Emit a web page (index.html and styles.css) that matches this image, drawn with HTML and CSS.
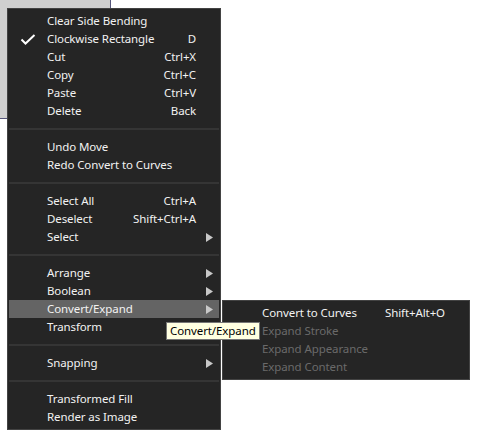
FILE: index.html
```html
<!DOCTYPE html>
<html>
<head>
<meta charset="utf-8">
<link rel="stylesheet" href="styles.css">
</head>
<body>
<div class="stage">
  <div class="canvas-doc"></div>

  <div class="menu main-menu">
    <div class="row"><span class="check"></span><span class="label">Clear Side Bending</span><span class="key"></span><span class="sub"></span></div>
    <div class="row"><span class="check"><svg width="16" height="11" viewBox="0 0 16 11"><path d="M1.5 5.5 L5.5 9.5 L14.5 1" fill="none" stroke="#ffffff" stroke-width="2"/></svg></span><span class="label">Clockwise Rectangle</span><span class="key">D</span><span class="sub"></span></div>
    <div class="row"><span class="check"></span><span class="label">Cut</span><span class="key">Ctrl+X</span><span class="sub"></span></div>
    <div class="row"><span class="check"></span><span class="label">Copy</span><span class="key">Ctrl+C</span><span class="sub"></span></div>
    <div class="row"><span class="check"></span><span class="label">Paste</span><span class="key">Ctrl+V</span><span class="sub"></span></div>
    <div class="row"><span class="check"></span><span class="label">Delete</span><span class="key">Back</span><span class="sub"></span></div>
    <div class="sep"></div>
    <div class="row"><span class="check"></span><span class="label">Undo Move</span><span class="key"></span><span class="sub"></span></div>
    <div class="row"><span class="check"></span><span class="label">Redo Convert to Curves</span><span class="key"></span><span class="sub"></span></div>
    <div class="sep"></div>
    <div class="row"><span class="check"></span><span class="label">Select All</span><span class="key">Ctrl+A</span><span class="sub"></span></div>
    <div class="row"><span class="check"></span><span class="label">Deselect</span><span class="key">Shift+Ctrl+A</span><span class="sub"></span></div>
    <div class="row"><span class="check"></span><span class="label">Select</span><span class="key"></span><span class="sub"><svg width="7" height="9" viewBox="0 0 7 9"><path d="M0 0 L7 4.5 L0 9 Z" fill="#c8c8c8"/></svg></span></div>
    <div class="sep"></div>
    <div class="row"><span class="check"></span><span class="label">Arrange</span><span class="key"></span><span class="sub"><svg width="7" height="9" viewBox="0 0 7 9"><path d="M0 0 L7 4.5 L0 9 Z" fill="#c8c8c8"/></svg></span></div>
    <div class="row"><span class="check"></span><span class="label">Boolean</span><span class="key"></span><span class="sub"><svg width="7" height="9" viewBox="0 0 7 9"><path d="M0 0 L7 4.5 L0 9 Z" fill="#c8c8c8"/></svg></span></div>
    <div class="row active"><span class="check"></span><span class="label">Convert/Expand</span><span class="key"></span><span class="sub"><svg width="7" height="9" viewBox="0 0 7 9"><path d="M0 0 L7 4.5 L0 9 Z" fill="#c8c8c8"/></svg></span></div>
    <div class="row"><span class="check"></span><span class="label">Transform</span><span class="key"></span><span class="sub"></span></div>
    <div class="sep"></div>
    <div class="row"><span class="check"></span><span class="label">Snapping</span><span class="key"></span><span class="sub"><svg width="7" height="9" viewBox="0 0 7 9"><path d="M0 0 L7 4.5 L0 9 Z" fill="#c8c8c8"/></svg></span></div>
    <div class="sep"></div>
    <div class="row"><span class="check"></span><span class="label">Transformed Fill</span><span class="key"></span><span class="sub"></span></div>
    <div class="row"><span class="check"></span><span class="label">Render as Image</span><span class="key"></span><span class="sub"></span></div>
  </div>

  <div class="menu submenu">
    <div class="row"><span class="check"></span><span class="label">Convert to Curves</span><span class="key">Shift+Alt+O</span><span class="sub"></span></div>
    <div class="row disabled"><span class="check"></span><span class="label">Expand Stroke</span><span class="key"></span><span class="sub"></span></div>
    <div class="row disabled"><span class="check"></span><span class="label">Expand Appearance</span><span class="key"></span><span class="sub"></span></div>
    <div class="row disabled"><span class="check"></span><span class="label">Expand Content</span><span class="key"></span><span class="sub"></span></div>
  </div>

  <div class="tooltip">Convert/Expand</div>
</div>
</body>
</html>
```

FILE: styles.css
```css
html, body {
  margin: 0;
  padding: 0;
  background: #ffffff;
}

.stage {
  position: relative;
  width: 480px;
  height: 437px;
  overflow: hidden;
  font-family: "Noto Sans", "Open Sans", sans-serif;
  font-size: 11.5px;
  letter-spacing: -0.1px;
}

.canvas-doc {
  position: absolute;
  left: 0;
  top: 0;
  width: 110px;
  height: 118px;
  background: #d0d0d0;
  border-right: 1px solid #55557a;
  border-bottom: 1px solid #55557a;
}

.menu {
  position: absolute;
  background: #252525;
  border: 1px solid #434343;
  padding: 3px 1px;
  color: #f2f2f2;
}

.main-menu {
  left: 7px;
  top: 8px;
  width: 210px;
}

.submenu {
  left: 222px;
  top: 300px;
  width: 244px;
}

.row {
  display: grid;
  grid-template-columns: 38px 1fr auto 23px;
  align-items: center;
  height: 18px;
  line-height: 18px;
  white-space: nowrap;
}

.row.active {
  background: #646464;
}

.row.disabled {
  color: #6a6a6a;
}

.check {
  display: flex;
  align-items: center;
  padding-left: 11px;
  height: 18px;
}

.key {
  text-align: right;
}

.sub {
  display: flex;
  align-items: center;
  padding-left: 10px;
  height: 18px;
}

.sep {
  height: 2px;
  margin: 8px 0;
  background: #353535;
}

.tooltip {
  position: absolute;
  left: 166px;
  top: 322px;
  height: 16px;
  line-height: 16px;
  padding: 0 3px 0 3px;
  background: #ffffe1;
  border: 1px solid #767676;
  color: #000000;
  white-space: nowrap;
}
```
